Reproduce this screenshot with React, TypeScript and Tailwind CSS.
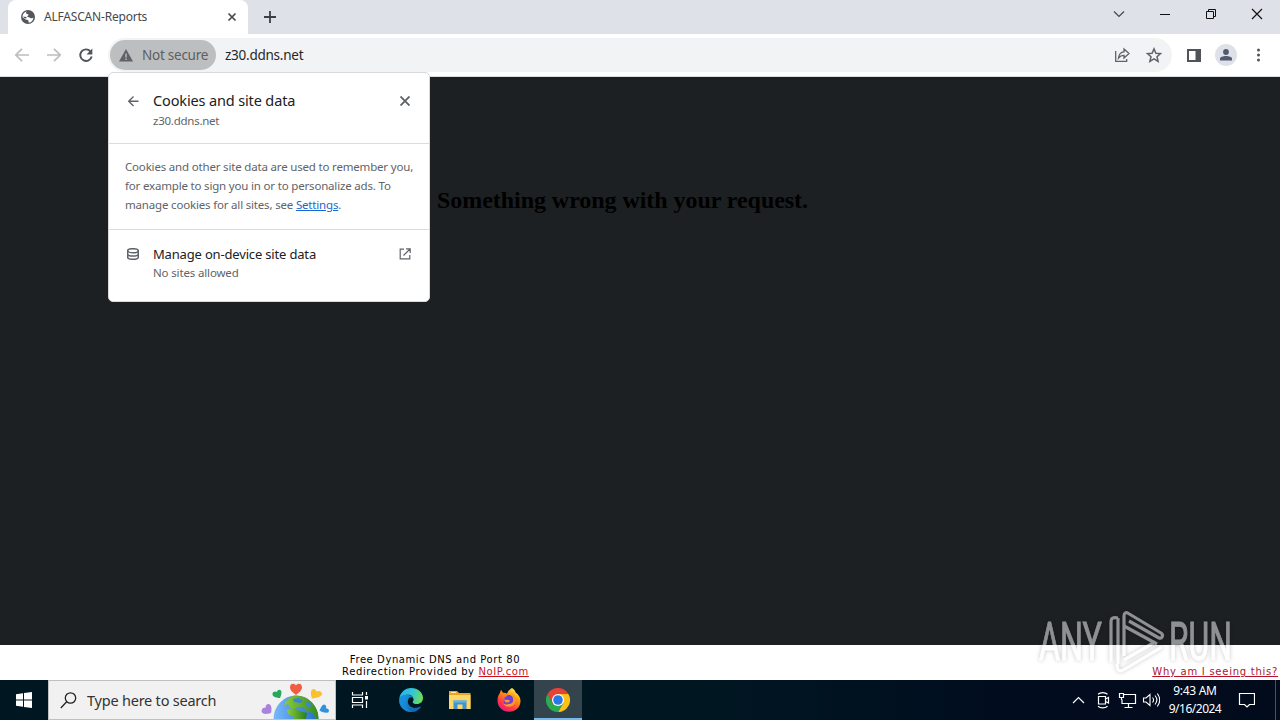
import React from 'react';

const GREY = '#5f6368';

function GlobeIcon() {
  return (
    <svg width="14" height="14" viewBox="0 0 14 14" className="shrink-0">
      <circle cx="7" cy="7" r="7" fill="#53575b" />
      <path d="M6 1.6c-1 .7-1.3 1.5-.5 2.2.7.6 1.8.1 2 .9.2 1-1.400.900-1.300 1.900.1.9 1.500.400 2.200.9.9.6 1.600.9 2.800.7l1-.8c.2 2.700-1.700 5-4.700 5.200-.2-1 .4-1.700-.3-2.400-.8-.7-2.200-.3-3.100-1-.8-.6-1.100-1.500-2.500-1.700C1.400 4.500 3.200 2 6 1.600z" fill="#fff" />
      <path d="M2.200 6.500c1 .1 1.600.5 3.200.4l.3 1.300-2 .2z" fill="#53575b" />
    </svg>
  );
}

function EarthIcon() {
  return (
    <svg width="74" height="38" viewBox="0 0 74 38">
      <defs>
        <linearGradient id="sea" x1="0" x2="1">
          <stop offset="0" stopColor="#79b8fb" />
          <stop offset="1" stopColor="#246fc4" />
        </linearGradient>
        <linearGradient id="land" x1="0" x2="1">
          <stop offset="0" stopColor="#8dcc38" />
          <stop offset="1" stopColor="#277f20" />
        </linearGradient>
        <clipPath id="globe"><ellipse cx="36" cy="38" rx="22.500" ry="23.500" /></clipPath>
      </defs>
      <ellipse cx="36" cy="38" rx="22.500" ry="23.500" fill="url(#sea)" />
      <g clipPath="url(#globe)" fill="url(#land)">
        <path d="M24 24c2-5 6-8 10-10l15 1 11 9 4 14-7 2-4-8-6-2-4-4-6 0-3 3-4-2-2-4-3 1z" />
        <path d="M27 29l7-2 6 3 7 2-1 6H34l-1-3-5-2z" />
      </g>
      <path d="M33 18l6-1 4 3-3 2-6-1zM47 20l4 3-1 4-4-3z" fill="#3d84d6" />
      <g>
        <path d="M30.500 14.500z M36 14c-3-2.500-6-4.500-6-8 0-3.500 4.300-4.500 6-1.500 1.700-3 6-2 6 1.500 0 3.500-3 5.500-6 8z" fill="#f15c42" />
        <path d="M20 17c-3-.3-7-.7-7.500-3.500C12 11 15 9.700 17 11c.5-3 4-2.700 4.400-.2.3 2-.5 4.200-1.400 6.200z" fill="#2aa65c" />
        <path d="M52 17.500c-.8-3-2-6.400-.3-8.600C53.500 7 56 8 56.500 10.500c2.400-1.500 6 .5 5.500 3-.8 2.500-6 3.500-10 4z" fill="#fbc02d" />
        <path d="M11 32c-3 .9-8 2-9.200-1-.8-2.600 1.400-4.800 3.800-4.200-.3-3.800 3.200-4.800 4.800-2.800 1.600 2 1.200 5.200.6 8z" fill="#a982dc" />
        <path d="M59.500 29.500c1.300-2.500 3-6.500 5.200-5.800 1.800.6 1.800 2.800 1.300 3.800 2.400-.3 3.600 1.600 2.700 3.300-1.100 2-6 .7-9.200-1.300z" fill="#2f91de" />
      </g>
    </svg>
  );
}

function EdgeIcon() {
  return (
    <svg width="24" height="24" viewBox="0 0 24 24">
      <defs>
        <linearGradient id="edgeTop" x1="0" y1="0.3" x2="1" y2="0.5">
          <stop offset="0" stopColor="#2bb2ee" />
          <stop offset="0.5" stopColor="#30c4dc" />
          <stop offset="1" stopColor="#6ede54" />
        </linearGradient>
        <linearGradient id="edgeLow" x1="0" y1="0" x2="1" y2="1">
          <stop offset="0" stopColor="#1b9de2" />
          <stop offset="1" stopColor="#1259a8" />
        </linearGradient>
      </defs>
      <path d="M.2 11C1 4.500 6 0 12.200 0 19 0 24 4.600 24 10c0 3.700-2.800 6-6 6-2.800 0-4.300-1-4.300-1.800 0-.7.8-1.200.8-2.800 0-2.500-2.300-4.600-5.500-4.600C4.500 6.800 1 9 .2 11z" fill="url(#edgeTop)" />
      <path d="M.2 11C1.200 8.200 4.600 6.400 8.500 6.800c3.500.3 5.500 2 5.900 4-.6-1-1.500-1.500-2.600-1.500-1.700 0-3 2-3 4.300 0 4.200 4.200 7 8.500 6.200 2.100-.4 4-1.500 4.500-1.300.6.3-1.400 2.600-3.500 3.900C16 23.900 14 24 12 24 5.300 24-.5 18.200.2 11z" fill="url(#edgeLow)" />
      <path d="M8.500 9.700C5 13 6.200 20 12.200 23.900 5.600 24 0 18.200.2 11.700c3-2.600 5.300-2.700 8.300-2z" fill="#1690db" opacity=".65" />
    </svg>
  );
}

function FolderIcon() {
  return (
    <svg width="22" height="20" viewBox="0 0 22 20">
      <path d="M0 1h8l2 2h11.500v16H0z" fill="#e8a52b" />
      <path d="M0 5h21.500v14H0z" fill="#ffd766" />
      <path d="M2 2.500h5" stroke="#fff0b0" />
      <path d="M4.500 19v-8.500h13V19h-4v-4.500h-5V19z" fill="#3e94d1" />
      <path d="M4.500 10.500h13v2h-13z" fill="#63b6e8" />
    </svg>
  );
}

function FirefoxIcon() {
  return (
    <svg width="24" height="24" viewBox="0 0 24 24">
      <defs>
        <linearGradient id="fox" x1="0.8" y1="0" x2="0.2" y2="1">
          <stop offset="0" stopColor="#fff44f" />
          <stop offset="0.35" stopColor="#ff980e" />
          <stop offset="0.7" stopColor="#ff3b45" />
          <stop offset="1" stopColor="#e21587" />
        </linearGradient>
      </defs>
      <path d="M15 0c2 1 3.200 3 3.800 4.700C21 6 23.500 9 23.500 13c0 6.300-5 10.800-11.400 10.800C5.500 23.800.5 19 .5 12.500c0-3.600 1.200-6.200 2.400-7.600L4 1.800l2 3c1.500-.4 3 0 4 .9.800-2 2.300-4.300 5-5.700z" fill="url(#fox)" />
      <circle cx="12" cy="13" r="5.400" fill="#7a3fe0" />
      <path d="M6.500 10.500c1.500 2 3 1.500 4.800 1.100C14 11 12 8.600 10 8.500c2-2 5-1.300 6.500.6l-2-4c4 1.600 5 6 3.400 9.800C16 19.300 9 20.200 6 15.500c1.900 1.600 4.800 1.400 6-.5-2.500.7-4.500-1.500-5.500-4.500z" fill="#ff9a28" />
      <path d="M9.500 7.800c2-1.300 4.500-.7 5.700.8 1.600 2 1.300 5.200-.4 6.500-2.500 1.800-5 .5-5-1 1.500.5 2.900-.1 2.900-1.200 0-1-.9-1.300-2.400-1.200z" fill="#6b42d8" />
    </svg>
  );
}

function ChromeIcon() {
  return (
    <svg width="24" height="24" viewBox="0 0 24 24">
      <path d="M12 12V6h10.400A12 12 0 0 1 12 24l5.200-9z" fill="#fbc116" />
      <path d="M12 12l5.200 3L12 24A12 12 0 0 1 1.600 6l5.200 9z" fill="#2da94f" />
      <path d="M12 6h10.400A12 12 0 0 0 1.600 6l5.200 9z" fill="#e94235" />
      <circle cx="12" cy="12" r="6" fill="#fff" />
      <circle cx="12" cy="12" r="4.800" fill="#2978e8" />
    </svg>
  );
}

function TabStrip() {
  return (
    <div className="flex h-[34px] shrink-0 bg-[#dee1e8] pl-2">
      <div className="flex h-full w-60 items-center rounded-t-lg bg-white pl-[13px] pr-[11px]">
        <GlobeIcon />
        <span className="ml-[9px] flex-1 whitespace-nowrap text-[12px] tracking-[-0.2px] text-[#45494d]">ALFASCAN-Reports</span>
        <svg width="10" height="10" viewBox="0 0 10 10" stroke="#45494d" strokeWidth="1.700">
          <path d="M1.500 1.500l7 7M8.500 1.500l-7 7" />
        </svg>
      </div>
      <svg width="12" height="12" viewBox="0 0 12 12" className="ml-4 mt-[11px]" stroke="#3c4043" strokeWidth="1.800">
        <path d="M6 0v12M0 6h12" />
      </svg>
      <svg width="170" height="28" viewBox="0 0 170 28" className="ml-auto" fill="none" stroke="#111">
        <path d="M4 11.500l5 5 5-5" stroke="#44474b" strokeWidth="1.200" />
        <path d="M50 14.500h10" />
        <path d="M96.500 11.500h7v7h-7zM98.500 11.500v-2h7v7h-2" />
        <path d="M142 9l10 10M152 9l-10 10" strokeWidth="1.200" />
      </svg>
    </div>
  );
}

function Toolbar() {
  return (
    <div className="flex h-[43px] shrink-0 items-center border-b border-[#dadce0] bg-white pl-[14px]">
      <svg width="80" height="16" viewBox="0 0 80 16" fill="none" strokeWidth="1.700">
        <path d="M15 8H2M8 1.800 1.800 8 8 14.200M33 8h13M40 1.800 46.200 8 40 14.200" stroke="#bbbdc0" />
        <path d="M76.400 4.300A5.800 5.800 0 1 0 77.700 9.500" stroke="#505458" strokeWidth="1.900" />
        <path d="M78.300 1.600v5.800h-5.800z" fill="#505458" />
      </svg>
      <div className="ml-[14px] flex h-[34px] w-[1064px] items-center rounded-full bg-[#f1f3f4] pl-0.5">
        <div className="flex h-[30px] w-[106px] items-center rounded-full bg-[#bdbebf] pl-[9px]">
          <svg width="14" height="13" viewBox="0 0 14 13">
            <path d="M7 0l7 12.500H0z" fill={GREY} />
            <path d="M7 4.500v4M7 9.500v1.500" stroke="#bdbebf" strokeWidth="1.400" />
          </svg>
          <span className="ml-[9px] whitespace-nowrap text-[13.500px] tracking-[-0.25px] text-[#5b5f63]">Not secure</span>
        </div>
        <span className="ml-[9px] text-[13.500px] tracking-[-0.25px] text-[#24272a]">z30.ddns.net</span>
        <svg width="50" height="16" viewBox="0 0 50 16" className="ml-auto mr-[9px]" fill="none" stroke={GREY} strokeWidth="1.300">
          <path d="M2.700 4v10.300h11V12M5.500 11c.4-4 2.600-6 5.500-6.200V2l5 4.600-5 4.400V8.300c-2.500 0-4.200.9-5.500 2.700z" />
          <path d="M41 1.900l1.900 4.300 4.600.4-3.500 3.100 1.100 4.600-4.100-2.500-4.100 2.500L38 9.700l-3.500-3.100 4.600-.4z" strokeWidth="1.500" />
        </svg>
      </div>
      <svg width="14" height="13" viewBox="0 0 14 13" className="ml-[15px]">
        <path d="M1 1h12v11H1z" fill="none" stroke="#505458" strokeWidth="2" />
        <path d="M8.500 0H14v13H8.500z" fill="#505458" />
      </svg>
      <svg width="22" height="22" viewBox="0 0 22 22" className="ml-[14px]">
        <circle cx="11" cy="11" r="11" fill="#dee1e8" />
        <circle cx="11" cy="8" r="2.900" fill="#525970" />
        <path d="M5 16.500v-1.800c0-1.700 3.200-2.700 6-2.700s6 1 6 2.700v1.800z" fill="#525970" />
      </svg>
      <svg width="4" height="14" viewBox="0 0 4 14" className="ml-[20px]" fill="#505458">
        <circle cx="1.500" cy="2" r="1.500" />
        <circle cx="1.500" cy="7" r="1.500" />
        <circle cx="1.500" cy="12" r="1.500" />
      </svg>
    </div>
  );
}

function CookiesPopup() {
  return (
    <div className="absolute left-[108px] top-[72px] h-[230px] w-[322px] rounded-[5px] border border-[#d8dadc] bg-white text-[#5f6368]">
      <div className="flex h-[71px] border-b border-[#dadce0] pl-[19px] pr-[19px] pt-[18px]">
        <svg width="11" height="11" viewBox="0 0 11 11" className="mt-[5px]" fill="none" stroke={GREY} strokeWidth="1.400">
          <path d="M10.500 5.200H.7M5.500.5.7 5.200l4.800 4.700" />
        </svg>
        <div className="-mt-px ml-[14px] flex-1 whitespace-nowrap">
          <div className="h-[21px] text-[14.500px] leading-5 tracking-[-0.14px] text-[#202124]">Cookies and site data</div>
          <div className="h-5 text-[11.500px] leading-5 tracking-[-0.25px]">z30.ddns.net</div>
        </div>
        <svg width="10" height="10" viewBox="0 0 10 10" className="mt-[5px]" stroke={GREY} strokeWidth="1.900">
          <path d="M.5.5l9 9M9.500.5l-9 9" />
        </svg>
      </div>
      <div className="h-[86px] whitespace-nowrap border-b border-[#dadce0] pl-4 pt-[13px] text-[11.500px] leading-[19px] tracking-[-0.18px]">
        <div>Cookies and other site data are used to remember you,</div>
        <div>for example to sign you in or to personalize ads. To</div>
        <div>manage cookies for all sites, see <span className="text-[#1967d2] underline">Settings</span>.</div>
      </div>
      <div className="flex pl-[18px] pr-[18px] pt-[15px]">
        <svg width="12" height="12" viewBox="0 0 12 12" className="mt-[3px]" fill="none" stroke={GREY} strokeWidth="1.500">
          <ellipse cx="6" cy="2.700" rx="5.300" ry="2" />
          <path d="M.7 2.700v6.500c0 1.200 2.300 2.100 5.300 2.100s5.300-.9 5.300-2.100V2.700M.7 6c0 1.200 2.300 2.100 5.300 2.100s5.300-.9 5.300-2.100" />
        </svg>
        <div className="ml-[14px] flex-1 whitespace-nowrap">
          <div className="h-[19px] text-[13px] leading-[19px] tracking-[-0.17px] text-[#202124]">Manage on-device site data</div>
          <div className="h-[19px] text-[11.500px] leading-[18px] tracking-[-0.15px]">No sites allowed</div>
        </div>
        <svg width="12" height="12" viewBox="0 0 12 12" className="mt-[3px]" fill="none" stroke={GREY} strokeWidth="1.200">
          <path d="M5 1.200H1.200v9.600h9.600V7M7 .8h4.200V5M11 1 4.500 7.500" />
        </svg>
      </div>
    </div>
  );
}

function Watermark() {
  return (
    <svg width="204" height="72" viewBox="0 0 204 72" className="absolute left-[1034px] top-[606px] opacity-50 drop-shadow-[0_0_2px_rgba(0,0,0,0.45)]">
      <g fill="#fff" fontFamily="Roboto, sans-serif" fontSize="53" stroke="#fff" strokeWidth="1">
        <text x="5" y="54" textLength="63" lengthAdjust="spacingAndGlyphs">ANY</text>
        <text x="135" y="54" textLength="63" lengthAdjust="spacingAndGlyphs">RUN</text>
      </g>
      <g fill="none" stroke="#fff" strokeWidth="3.200" strokeLinejoin="round">
        <path d="M84 12c-5-1-7 0-7 4v40" />
        <path d="M90 50V10c0-3.500 2-4 4.500-2.500L127 27c3 2 1 6-2 5L95 15" />
        <path d="M84 58V12M90 20l33 18" />
        <path d="M83 58c0 8 3 8 8 5l37-22M90 54l31-18" />
      </g>
    </svg>
  );
}

function Taskbar() {
  return (
    <div className="flex h-10 shrink-0 bg-[linear-gradient(90deg,#001620,#001722_55%,#010c1e_80%,#010b1c)] text-white">
      <div className="flex w-12 items-center justify-center">
        <svg width="16" height="16" viewBox="0 0 16 16" fill="#fff">
          <path d="M0 2.200 7 1.200v6.300H0zM8 1l8-1v7.500H8zM0 8.500h7v6.300l-7-1zM8 8.500h8V16l-8-1.100z" />
        </svg>
      </div>
      <div className="flex w-72 items-center border border-[#bfc1c1] bg-[#f1f1f1] pl-[11px] text-[#333]">
        <svg width="17" height="17" viewBox="0 0 17 17" fill="none" stroke="#222" strokeWidth="1.300">
          <circle cx="10.500" cy="6" r="5.200" />
          <path d="M6.700 9.800.8 16" />
        </svg>
        <span className="ml-[10px] whitespace-nowrap pt-px text-[14.500px] tracking-[-0.22px]">Type here to search</span>
        <div className="ml-auto mr-px h-[38px]"><EarthIcon /></div>
      </div>
      <div className="flex w-12 items-center justify-center">
        <svg width="18" height="16" viewBox="0 0 18 16" fill="none" stroke="#fff" strokeWidth="1.200">
          <path d="M1.500 0v3h10V0M1.500 16v-3h10v3M1.500 5.500h10v5h-10zM15.500 0v3M15.500 9v7" />
          <path d="M14 4h3v3.500h-3z" fill="#fff" stroke="none" />
        </svg>
      </div>
      <div className="flex w-[54px] items-center justify-center"><EdgeIcon /></div>
      <div className="flex w-11 items-center justify-center"><FolderIcon /></div>
      <div className="flex w-[52px] items-center justify-center pl-[2px]"><FirefoxIcon /></div>
      <div className="flex w-12 items-center justify-center border-b-2 border-[#76b9ed] bg-[#33444d] pt-0.5"><ChromeIcon /></div>
      <svg width="92" height="40" viewBox="0 0 92 40" className="ml-auto" fill="none" stroke="#fff" strokeWidth="1.200">
        <path d="M5 23l5.500-5.500L16 23" />
        <path d="M30.500 16.500h7v7.500h-7zM37.500 19l3-1.500v5.500l-3-1.500M30 14.200c2.500-2.200 7-2.200 9.500 0M30 26.200c2.500 2.200 7 2.200 9.500 0" />
        <path d="M56 14.500h11.500v9H54v-4M51.500 13.500h4v4h-4zM53.500 17.500v2.500M60.500 23.500v4M56.500 27.500h8" />
        <path d="M75.500 18H78l4-3.500v11L78 22h-2.500zM84.500 17.500c1.300 1.500 1.300 3.500 0 5M87 15.500c2.500 3 2.500 6 0 9M89.300 13.500c3 4 3 9 0 13" strokeWidth="1.100" />
      </svg>
      <div className="ml-[5px] w-[58px] whitespace-nowrap pl-0.5 pt-[2px] text-center text-[12px] leading-[18px]">
        <div className="tracking-[-0.3px]">9:43 AM</div>
        <div className="tracking-[-0.5px]">9/16/2024</div>
      </div>
      <svg width="17" height="16" viewBox="0 0 17 16" className="ml-[15px] mt-3" fill="none" stroke="#fff" strokeWidth="1.200">
        <path d="M1.500 1.500h15v11h-5L9 15 6.500 12.500h-5z" />
      </svg>
      <div className="ml-5 mr-1 w-px bg-[#4c5260]" />
    </div>
  );
}

export default function App() {
  return (
    <div className="relative flex h-[720px] w-[1280px] flex-col overflow-hidden bg-[#1c2022] font-['Noto_Sans',sans-serif]">
      <TabStrip />
      <Toolbar />
      <main className="flex-1 pl-[437px] pt-[109px]">
        <h1 className="whitespace-nowrap font-['Liberation_Serif',serif] text-[24px] font-bold leading-7 tracking-[-0.05px] text-black">
          Something wrong with your request.
        </h1>
      </main>
      <footer className="flex h-[35px] shrink-0 justify-between bg-white pl-[342px] pr-[2px] font-['DejaVu_Sans',sans-serif] text-[10px] leading-3 text-black">
        <div className="w-[187px] whitespace-nowrap pt-[9px] text-center">
          <div className="pr-px tracking-[0.58px]">Free Dynamic DNS and Port 80</div>
          <div className="tracking-[0.61px]">Redirection Provided by <span className="text-[#cc1020] underline">NoIP.com</span></div>
        </div>
        <span className="mt-[21px] whitespace-nowrap tracking-[0.74px] text-[#b3122a] underline">Why am I seeing this?</span>
      </footer>
      <Taskbar />
      <CookiesPopup />
      <Watermark />
    </div>
  );
}
